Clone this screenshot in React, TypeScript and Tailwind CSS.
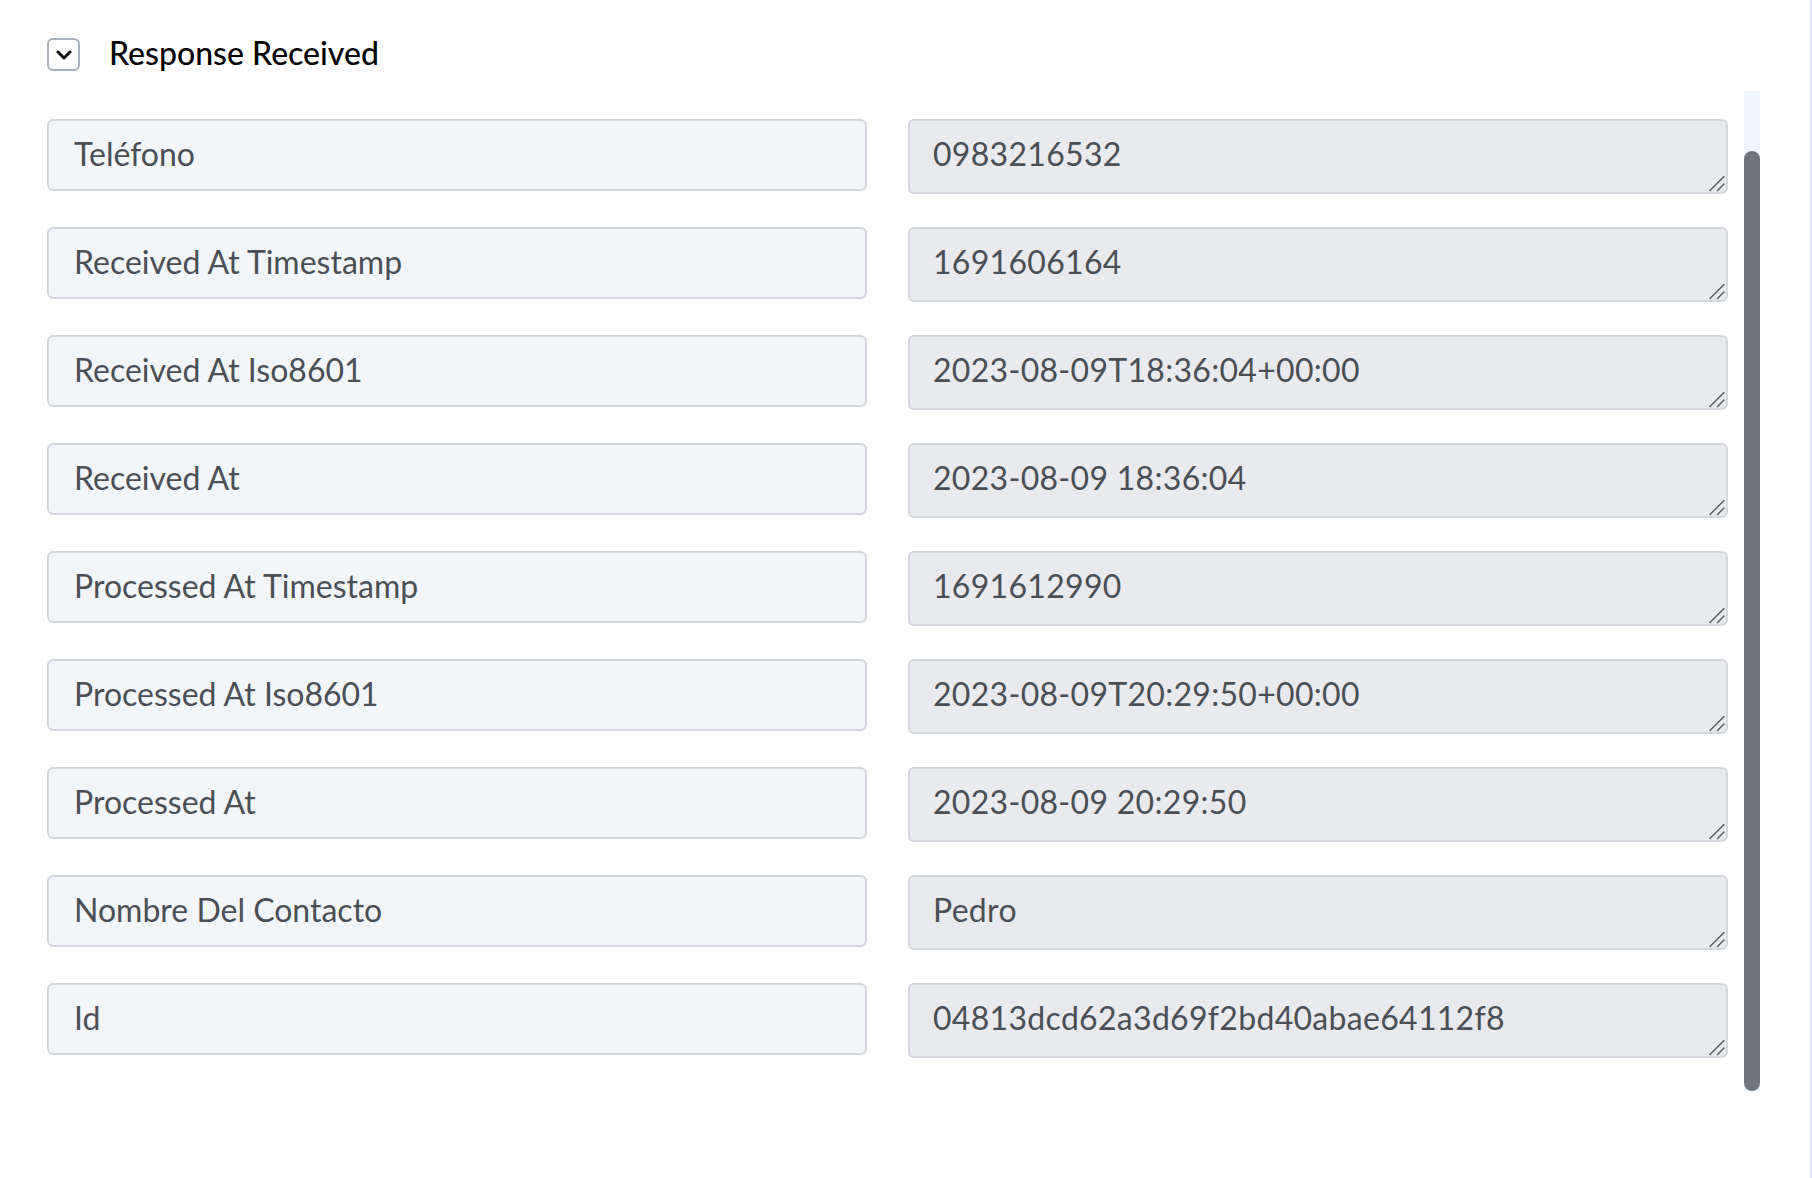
const fields: { label: string; value: string }[] = [
  { label: "Teléfono", value: "0983216532" },
  { label: "Received At Timestamp", value: "1691606164" },
  { label: "Received At Iso8601", value: "2023-08-09T18:36:04+00:00" },
  { label: "Received At", value: "2023-08-09 18:36:04" },
  { label: "Processed At Timestamp", value: "1691612990" },
  { label: "Processed At Iso8601", value: "2023-08-09T20:29:50+00:00" },
  { label: "Processed At", value: "2023-08-09 20:29:50" },
  { label: "Nombre Del Contacto", value: "Pedro" },
  { label: "Id", value: "04813dcd62a3d69f2bd40abae64112f8" },
];

const font = { fontFamily: "Lato, 'Noto Sans', sans-serif" };

function FieldRow({ label, value }: { label: string; value: string }) {
  return (
    <>
      <input
        readOnly
        value={label}
        className="h-[72px] w-full rounded-md border-2 border-[#d3d7dc] bg-[#f3f6f9] px-[25px] pb-[3px] text-[32px] text-[#4a4f56] outline-none"
        style={font}
      />
      <div className="relative">
        <textarea
          readOnly
          rows={1}
          value={value}
          className="block h-[75px] w-full resize-none rounded-md border-2 border-[#d3d7dc] bg-[#e9eaee] px-[23px] pt-[14px] text-[32px] leading-[1.2] tracking-[0.3px] text-[#4a4f56] outline-none"
          style={font}
        />
        {/* resize grip */}
        <svg
          className="pointer-events-none absolute bottom-[2px] right-[3px]"
          width="17"
          height="17"
          viewBox="0 0 17 17"
          stroke="#555a60"
          strokeWidth="1.4"
          strokeLinecap="round"
        >
          <path d="M2 15.5L16 1.5" />
          <path d="M9.5 15.5L16 9" />
        </svg>
      </div>
    </>
  );
}

export default function App() {
  return (
    <div
      className="h-[1178px] w-full border-r-2 border-[#dbe5f7] bg-white pl-[47px] pr-[50px] pt-[38px]"
      style={font}
    >
      {/* section header */}
      <div className="flex h-[33px] items-center gap-[29px]">
        <button className="flex h-[33px] w-[33px] items-center justify-center rounded-md border-2 border-[#aab0b9] bg-white">
          <svg width="16" height="10" viewBox="0 0 16 10" fill="none" stroke="#111" strokeWidth="3" strokeLinecap="round" strokeLinejoin="round">
            <path d="M2 2l6 6 6-6" />
          </svg>
        </button>
        <span className="-mt-[3px] text-[32px] font-medium text-black">Response Received</span>
      </div>

      {/* field list with scrollbar */}
      <div className="mt-[20px] flex h-[1000px]">
        <div className="flex-1 pt-[28px]">
          <div className="grid grid-cols-2 items-start gap-x-[41px] gap-y-[33px]">
            {fields.map((f) => (
              <FieldRow key={f.label} label={f.label} value={f.value} />
            ))}
          </div>
        </div>
        <div className="ml-4 flex h-full w-4 flex-col bg-[#eff6ff]">
          <div className="mt-[60px] flex-1 rounded-full bg-[#6e757c]" />
        </div>
      </div>
    </div>
  );
}
